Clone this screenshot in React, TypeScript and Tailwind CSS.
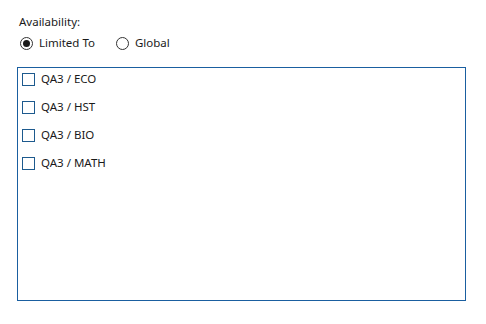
import { useState } from 'react';

// ── Radio ─────────────────────────────────────────────────────────────────

function Radio({ label, checked, onClick }: { label: string; checked: boolean; onClick: () => void }) {
  return (
    <label className="flex items-center gap-[6px] cursor-default" onClick={onClick}>
      <span className="w-[13px] h-[13px] rounded-full border border-[#333333] flex items-center justify-center bg-white">
        {checked && <span className="w-[7px] h-[7px] rounded-full bg-[#1a1a1a]" />}
      </span>
      <span>{label}</span>
    </label>
  );
}

// ── Checkbox row ──────────────────────────────────────────────────────────

function CheckRow({ label, checked, onClick }: { label: string; checked: boolean; onClick: () => void }) {
  return (
    <div className="flex items-center gap-[6px] h-[28px]" onClick={onClick}>
      <span className="w-[13px] h-[13px] border border-[#1d5a8e] bg-white flex items-center justify-center text-[10px] leading-none">
        {checked ? '✓' : ''}
      </span>
      <span>{label}</span>
    </div>
  );
}

const ITEMS = ['QA3 / ECO', 'QA3 / HST', 'QA3 / BIO', 'QA3 / MATH'];

export default function App() {
  const [mode, setMode] = useState<'limited' | 'global'>('limited');
  const [sel, setSel] = useState<Record<string, boolean>>({});

  return (
    <div className="w-[486px] h-[324px] bg-white text-[#1a1a1a] text-[11.5px] font-['Segoe_UI','Noto_Sans',sans-serif]">
      <div className="pt-[14px] pl-[19px] leading-[16px]">Availability:</div>
      <div className="flex items-center gap-[21px] pl-[20px] mt-[5px] leading-[16px]">
        <Radio label="Limited To" checked={mode === 'limited'} onClick={() => setMode('limited')} />
        <Radio label="Global" checked={mode === 'global'} onClick={() => setMode('global')} />
      </div>
      <div className="ml-[17px] mt-[16px] w-[449px] h-[234px] border border-[#1a5fa0] pl-[4px] flex flex-col">
        <div className="mt-[-3px]">
          {ITEMS.map((it) => (
            <CheckRow
              key={it}
              label={it}
              checked={!!sel[it]}
              onClick={() => setSel((s) => ({ ...s, [it]: !s[it] }))}
            />
          ))}
        </div>
      </div>
    </div>
  );
}
